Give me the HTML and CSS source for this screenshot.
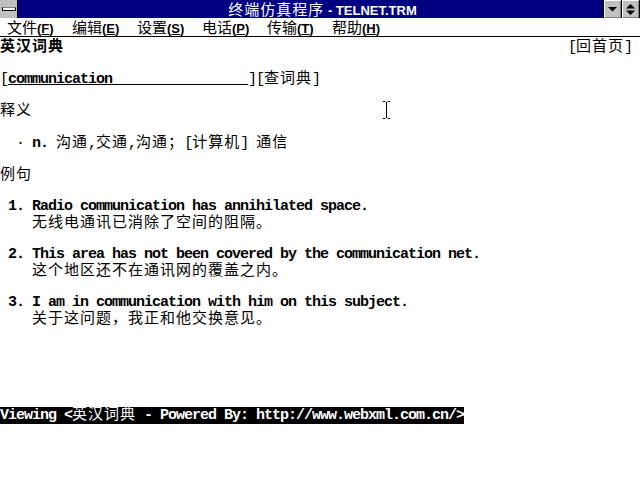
FILE: index.html
```html
<!DOCTYPE html>
<html>
<head>
<meta charset="utf-8">
<link rel="stylesheet" href="styles.css">
</head>
<body>
<div class="win">
  <div class="titlebar">
    <div class="sysbox"><span class="dash"></span></div>
    <div class="caption"><span class="tc">终端仿真程序</span><span class="te"> - TELNET.TRM</span></div>
    <div class="btn">
      <svg width="9" height="5" viewBox="0 0 9 5"><polygon points="0,0 9,0 4.5,4.5" fill="#000"/></svg>
    </div>
    <div class="btn">
      <svg width="9" height="11" viewBox="0 0 9 11"><polygon points="4.5,0 9,4.5 0,4.5" fill="#000"/><polygon points="0,6.5 9,6.5 4.5,11" fill="#000"/></svg>
    </div>
  </div>
  <div class="menubar">
    <span class="mi"><span class="mc">文件</span><span class="me">(<u>F</u>)</span></span>
    <span class="mi"><span class="mc">编辑</span><span class="me">(<u>E</u>)</span></span>
    <span class="mi"><span class="mc">设置</span><span class="me">(<u>S</u>)</span></span>
    <span class="mi"><span class="mc">电话</span><span class="me">(<u>P</u>)</span></span>
    <span class="mi"><span class="mc">传输</span><span class="me">(<u>T</u>)</span></span>
    <span class="mi"><span class="mc">帮助</span><span class="me">(<u>H</u>)</span></span>
  </div>
  <div class="term">
    <div class="row split"><span class="c b">英汉词典</span><span>[<span class="c">回首页</span>]</span></div>
    <div class="row"></div>
    <div class="row">[<span class="b field">communication                 </span>][<span class="c">查词典</span>]</div>
    <div class="row"></div>
    <div class="row"><span class="c">释义</span></div>
    <div class="row"></div>
    <div class="row">  · <span class="b">n.</span> <span class="c">沟通</span>,<span class="c">交通</span>,<span class="c">沟通；</span>[<span class="c">计算机</span>] <span class="c">通信</span></div>
    <div class="row"></div>
    <div class="row"><span class="c">例句</span></div>
    <div class="row"></div>
    <div class="row en b"> 1. Radio communication has annihilated space.</div>
    <div class="row">    <span class="c">无线电通讯已消除了空间的阻隔。</span></div>
    <div class="row"></div>
    <div class="row en b"> 2. This area has not been covered by the communication net.</div>
    <div class="row">    <span class="c">这个地区还不在通讯网的覆盖之内。</span></div>
    <div class="row"></div>
    <div class="row en b"> 3. I am in communication with him on this subject.</div>
    <div class="row">    <span class="c">关于这问题，我正和他交换意见。</span></div>
    <div class="row"></div>
    <div class="row"></div>
    <div class="row"></div>
    <div class="row"></div>
    <div class="row"></div>
    <div class="row"><span class="status">Viewing &lt;<span class="c">英汉词典</span> - Powered By: http://www.webxml.com.cn/&gt;</span></div>
  </div>
  <svg class="ibeam" width="9" height="18" viewBox="0 0 9 18">
    <path d="M1 0.5H3.5M5.5 0.5H8M4.5 1V17M1 17.5H3.5M5.5 17.5H8" stroke="#000" stroke-width="1" fill="none"/>
  </svg>
</div>
</body>
</html>
```

FILE: styles.css
```css
html, body {
  margin: 0;
  padding: 0;
  background: #fff;
}
.win {
  position: relative;
  width: 640px;
  height: 480px;
  overflow: hidden;
  background: #fff;
}
.titlebar {
  display: flex;
  height: 18px;
  background: #000080;
}
.sysbox {
  width: 18px;
  height: 18px;
  box-sizing: border-box;
  background: #c0c0c0;
  border-right: 1px solid #000;
  display: flex;
  align-items: center;
  justify-content: center;
}
.dash {
  display: block;
  width: 12px;
  height: 2px;
  background: #fff;
  border: 1px solid #000;
  border-top-color: #808080;
}
.caption {
  flex: 1;
  height: 18px;
  color: #fff;
  text-align: center;
  line-height: 18px;
  white-space: pre;
  padding-left: 24px;
}
.tc {
  font-family: "Noto Sans CJK SC", sans-serif;
  font-size: 15px;
  letter-spacing: 1px;
}
.te {
  font-family: "Liberation Sans", sans-serif;
  font-weight: bold;
  font-size: 13px;
}
.btn {
  width: 18px;
  height: 18px;
  box-sizing: border-box;
  background: #c0c0c0;
  border-left: 1px solid #000;
  box-shadow: inset 1px 1px 0 #fff, inset -1px -1px 0 #808080;
  display: flex;
  align-items: center;
  justify-content: center;
}
.btn:last-child {
  width: 19px;
  border-right: 1px solid #000;
}
.menubar {
  height: 18px;
  border-bottom: 1px solid #000;
  padding-left: 7px;
  display: flex;
  line-height: 18px;
  white-space: pre;
}
.mi {
  width: 65px;
  color: #000;
}
.mc {
  font-family: "Noto Sans CJK SC", sans-serif;
  font-size: 15px;
}
.me {
  font-family: "Liberation Sans", sans-serif;
  font-weight: bold;
  font-size: 13px;
}
.term {
  font-family: "Liberation Mono", monospace;
  font-size: 15px;
  letter-spacing: -1px;
  color: #000;
}
.row {
  height: 16px;
  line-height: 16px;
  white-space: pre;
  overflow: visible;
}
.row.en {
  box-sizing: border-box;
  padding-top: 4px;
  line-height: 12px;
}
.split {
  display: flex;
  justify-content: space-between;
  padding-right: 8px;
}
.c {
  font-family: "Noto Sans CJK SC", sans-serif;
  font-size: 15px;
  letter-spacing: 1px;
  font-weight: normal;
}
.b {
  font-weight: bold;
}
.c.b {
  font-weight: bold;
}
.field {
  text-decoration: underline;
}
.status {
  background: #000;
  color: #fff;
  font-weight: bold;
}
.ibeam {
  position: absolute;
  left: 382px;
  top: 101px;
}
```
